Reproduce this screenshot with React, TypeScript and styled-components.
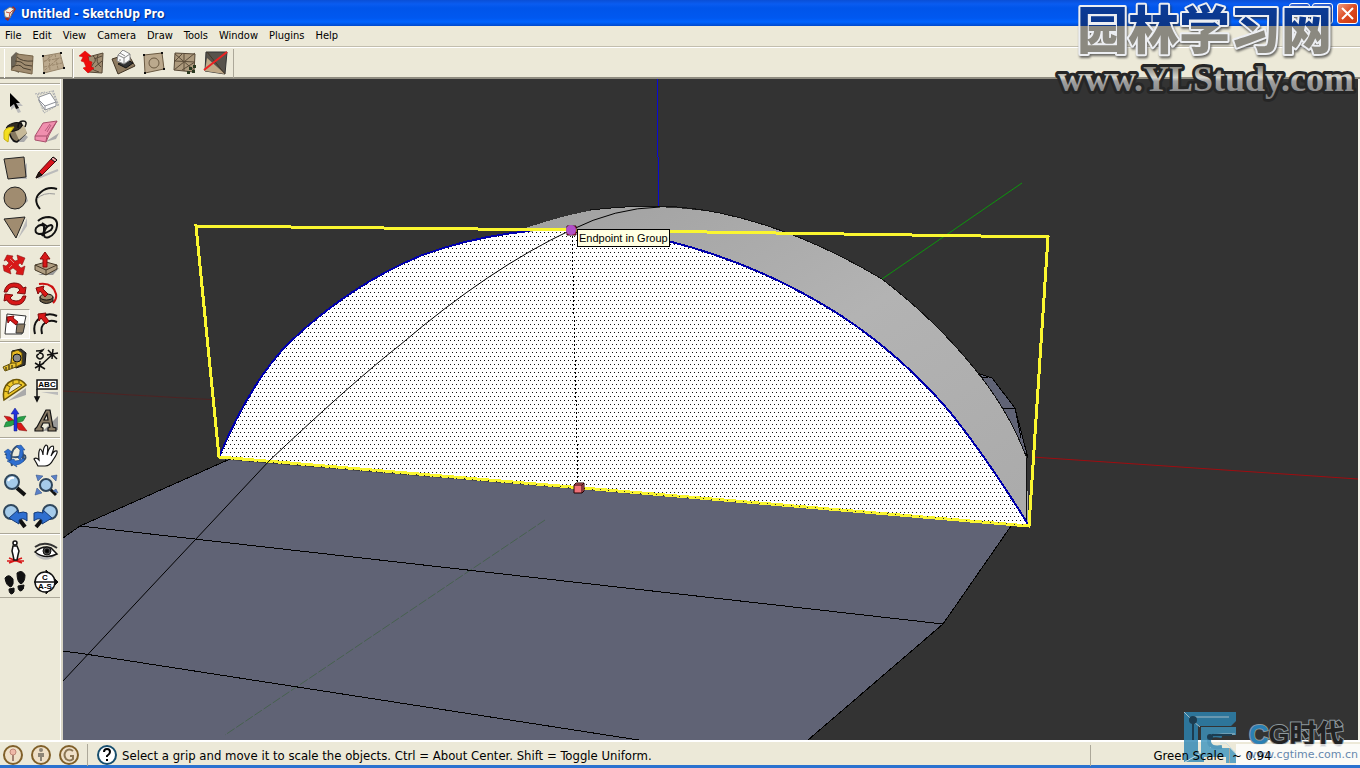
import React from "react";
import styled, { createGlobalStyle } from "styled-components";

const ui = '"DejaVu Sans Condensed", "DejaVu Sans", sans-serif';
const face = "#ece9d8";

const GlobalStyle = createGlobalStyle`
  * { box-sizing: border-box; }
  body { margin: 0; font-family: ${ui}; font-size: 11px; color: #000; background: ${face}; overflow: hidden; }
  button { font: inherit; color: inherit; border: 0; background: none; padding: 0; margin: 0; }
`;

const Window = styled.div`
  position: relative;
  display: flex;
  flex-direction: column;
  height: 100vh;
  background: ${face};
`;

const TitleBar = styled.header`
  display: flex;
  align-items: center;
  gap: 4px;
  height: 26px;
  flex: none;
  padding: 0 2px;
  background: linear-gradient(#0a4fd6 0, #0a5cf0 4px, #0055ea 8px, #0058f0 18px, #0064ff 22px, #0049cc 26px);
`;

const Title = styled.h1`
  flex: 1;
  margin: 0;
  padding-top: 1px;
  font: bold 12px ${ui};
  color: #fff;
  text-shadow: 1px 1px 1px #0a2a80;
`;

const Controls = styled.div`
  display: flex;
  gap: 2px;
`;

const ControlButton = styled.button<{ $close?: boolean }>`
  width: 21px;
  height: 21px;
  margin-left: ${(p) => (p.$close ? "2px" : "0")};
  border: 1px solid #fff;
  border-radius: 3px;
  background: ${(p) => (p.$close ? "linear-gradient(135deg, #ee9a80, #dd4b22 50%, #c8360f)" : "linear-gradient(135deg, #3f6cd8, #1446b8)")};
  svg { display: block; margin: auto; }
`;

const MenuBar = styled.nav`
  display: flex;
  gap: 11px;
  align-items: center;
  height: 20px;
  flex: none;
  padding: 0 5px;
`;

const MenuItem = styled.button`
  line-height: 16px;
`;

const ToolBar = styled.div`
  display: flex;
  align-items: center;
  height: 33px;
  flex: none;
  padding: 2px 0 0 4px;
  border-top: 1px solid #c2beae;
  border-bottom: 2px solid #8f8c80;
  box-shadow: inset 0 1px #fff;
`;

const ToolSet = styled.div`
  display: flex;
  gap: 1px;
  height: 29px;
  align-items: center;
  padding: 0 4px 0 2px;
  border-left: 1px solid #fff;
  border-right: 1px solid #aca899;
  & + & { padding: 0 2px 0 3px; }
`;

const ToolButton = styled.button<{ $active?: boolean }>`
  display: grid;
  place-items: center;
  width: 30px;
  height: 30px;
  border: 1px solid;
  border-color: ${(p) => (p.$active ? "#aca899 #fff #fff #aca899" : "transparent")};
  background: ${(p) => (p.$active ? "#f6f4ec" : "none")};
`;

const Body = styled.div`
  display: flex;
  flex: 1;
  min-height: 0;
`;

const Palette = styled.aside`
  width: 63px;
  flex: none;
  padding-top: 4px;
  border-right: 2px solid #d8d5c6;
  box-shadow: inset -1px 0 #fff;
`;

const Group = styled.div`
  display: grid;
  grid-template-columns: 30px 30px;
  column-gap: 1px;
  padding: 3px 0 2px;
  border-top: 1px solid #aca899;
  box-shadow: inset 0 1px #fff;
  margin-right: 1px;
  &:last-child { border-bottom: 1px solid #aca899; padding-bottom: 0; }
`;

const Viewport = styled.main`
  position: relative;
  flex: 1;
  min-width: 0;
  background: #333;
  border-right: 2px solid #f4f2e8;
  svg { display: block; }
`;

const Tip = styled.div`
  position: absolute;
  left: 514px;
  top: 150px;
  padding: 1px 1px 0;
  border: 1px solid #000;
  background: #ffffe1;
  font: 11px/15px "Liberation Sans", sans-serif;
  white-space: nowrap;
`;

const StatusBar = styled.footer`
  display: flex;
  align-items: center;
  height: 28px;
  flex: none;
  padding: 3px 0 0 2px;
  border-top: 2px solid #fff;
  border-bottom: 3px solid #2b72cf;
  font-size: 13px;
`;

const Badges = styled.div`
  display: flex;
  gap: 6px;
  padding-right: 7px;
  margin-right: 8px;
  border-right: 1px solid #aca899;
  svg { display: block; }
`;

const Hint = styled.span`
  flex: 1;
  padding-left: 4px;
`;

const Measure = styled.div`
  position: relative;
  z-index: 1;
  display: flex;
  width: 270px;
  height: 21px;
  align-items: center;
  border-left: 1px solid #aca899;
`;

const MeasureLabel = styled.span`
  width: 139px;
  padding-right: 5px;
  text-align: right;
  border-right: 1px solid #aca899;
  margin-right: 2px;
`;

const SiteMark = styled.div`
  position: absolute;
  right: 0;
  top: 0;
  pointer-events: none;
  svg { display: block; }
`;

const CgMark = styled.div`
  position: absolute;
  right: 0;
  bottom: 3px;
  width: 176px;
  height: 53px;
  display: flex;
  pointer-events: none;
  svg { flex: none; }
`;

const CgText = styled.div`
  flex: 1;
  display: flex;
  flex-direction: column;
  align-items: flex-start;
`;

const CgName = styled.div`
  height: 32px;
  padding-left: 13px;
  font: 900 27px/46px "Liberation Sans", "Noto Sans CJK SC", sans-serif;
  color: #222;
  -webkit-text-stroke: 2px #8d979c;
  paint-order: stroke fill;
  white-space: nowrap;
  span { color: #2a80b4; }
`;

const CgUrl = styled.div`
  align-self: stretch;
  height: 21px;
  padding-right: 2px;
  text-align: right;
  background: rgba(255, 255, 255, 0.8);
  font: 11px/22px "DejaVu Sans", sans-serif;
  color: #6688ad;
`;

const wood = "#a08c70";
const red = "#d81818";
const blue = "#2f6fd0";
const K = "#111";

const Ic = ({ children }: { children: React.ReactNode }) => (
  <svg width="26" height="26" viewBox="0 0 26 26" fill="none" stroke={K} strokeWidth="1" aria-hidden="true">
    {children}
  </svg>
);

const toolbarIcons: Record<string, React.ReactNode> = {
  "From Contours": (
    <Ic><path d="M2 7l5-5 3 2v19l-8-4z" fill="#6c6558" stroke="none" /><path d="M8 4l16 2-1 18-21-4 5-6z" fill={wood} stroke="#766449" /><path d="M8 7q5 5 16 4M6 11q7 0 10 4l7 1M3 17q8-4 11 1l8 2" stroke="#4b4030" /></Ic>
  ),
  "From Scratch": (
    <Ic><path d="M3 6l17-3 4 15-20 5z" fill="#bba98d" stroke="#97856a" /><path d="M4 11l17-3M4 17l18-4M9 5l1 16M15 4l3 15M4 12l9-7M5 20L20 7" stroke="#9a876b" strokeDasharray="3 1" /><path d="M2 6h2M20 3h2M23 18h2M3 23h2" strokeWidth="2" /></Ic>
  ),
  Smoove: (
    <Ic><path d="M9 7l15-4-1 20-14-1z" fill={wood} stroke="#554735" /><path d="M14 6q5 3 0 8t6 8M19 5q-3 7 3 12M15 9l8-3M16 17l7-6" stroke="#554735" /><path d="M6 1l6 5H9l1 5 3 1-1 5 3 1-6 5-5-5 3-1-2-5-3-1 2-4-4-1z" fill="#ee0c0c" stroke="#c00" strokeWidth=".5" /></Ic>
  ),
  Stamp: (
    <Ic><path d="M2 9l16-5 7 12-17 8z" fill="#8e7b60" stroke="#403424" /><path d="M8 14l8 4 7-5-7-4z" fill="#333" /><path d="M8 5l5-5 7 4v6l-6 4-7-3z" fill="#fafafa" stroke="#888" /><path d="M8 5l6 3 6-4M14 8v6M10 3l5 3M10 9v2" stroke="#888" /></Ic>
  ),
  Drape: (
    <Ic><path d="M3 5l18-2 2 16-19 4z" fill="#bba98d" stroke="#6a5a42" /><circle cx="13" cy="13" r="5" stroke="#6b5a42" /><path d="M2 5h2M20 3h2M22 19h2M3 23h2" strokeWidth="2" /></Ic>
  ),
  "Add Detail": (
    <Ic><path d="M3 3l20 1-1 18-20-2z" fill="#ad9a7d" stroke="#554735" /><path d="M2 20L23 3M3 11l20 1M12 4v17M3 4l20 17M3 11l7-7M10 20l13-8" stroke="#5c4d39" /><path d="M17 17h3v3h-3zM20 20h3v3h-3zM21 15h3v3h-3zM15 21h3v3h-3z" fill="#2b3a20" stroke="none" /></Ic>
  ),
  "Flip Edge": (
    <Ic><path d="M3 2h21l-2 22-20-3z" fill="#57534c" stroke="#333" /><path d="M4 8l18 16-20-3z" fill="#c0aa88" stroke="none" /><path d="M4 2l18 22" stroke="#443827" /><path d="M1 20L24 2" stroke="#e22" strokeWidth="2" /></Ic>
  ),
};

const paletteGroups: [string, React.ReactNode][][] = [
  [
    ["Select", <Ic><path d="M8 4v16l4-3 3 6 3-1-3-6h5z" fill="#bbb" stroke="none" transform="translate(1 1)" /><path d="M8 4v14l4-3 2 5 3-1-3-5h4z" fill="#000" stroke="none" /></Ic>],
    ["Make Component", <Ic><path d="M4 6l15-4 6 14-14 8zM2 5l10-2M20 1l6 16" stroke="#a9abb0" strokeDasharray="2 1" /><path d="M6 8l11-4 6 9v4l-11 4-6-9z" fill="#fff" stroke="#8c8f96" /><path d="M6 11l6 6 11-4M12 17v4" stroke="#8c8f96" /></Ic>],
    ["Paint Bucket", <Ic><path d="M10 23h12l4-5-5-4z" fill="#aaa" stroke="none" /><path d="M6 9l13-5 5 10-9 9q-6 0-9-14z" fill="#86795f" strokeWidth="1.5" /><path d="M13 12l9-6 3 8-8 7z" fill="#c6b998" stroke="none" /><ellipse cx="12" cy="8" rx="8" ry="4" transform="rotate(-16 12 8)" fill="#302b22" /><path d="M16 9q0-7 5-7t2 6" strokeWidth="1.5" /><path d="M12 8Q3 8 2 13l0 7 4 3 1-8z" fill="#f3df20" stroke="#c8b010" /></Ic>],
    ["Eraser", <Ic><path d="M12 23l11-3 3-6z" fill="#aaa" stroke="none" /><path d="M2 17L10 4l14-2-8 14-3 7-11-2z" fill="#f08fae" stroke="#a8506c" /><path d="M2 17l12 0L24 2M14 17l-1 5" stroke="#a8506c" /><path d="M12 12l5-7M14 13l4-7" stroke="#b85c7c" /></Ic>],
  ],
  [
    ["Rectangle", <Ic><path d="M10 24h15V8z" fill="#bbb" stroke="none" /><path d="M2 4l20-2 2 20-18 2z" fill={wood} stroke="#222" /></Ic>],
    ["Line", <Ic><path d="M5 23l20-8" stroke="#bbb" strokeWidth="2" /><path d="M3 23l3-6L20 2l4 3L9 20z" fill="#d8141c" stroke="#5c0a0c" /><path d="M3 23l3-6 3 3z" fill="#2a1a10" /><path d="M18 4l4 3 2-2-4-3z" fill="#f4a5a8" /></Ic>],
    ["Circle", <Ic><path d="M16 25l10-9-2-6z" fill="#aaa" stroke="none" /><circle cx="13" cy="13" r="11" fill={wood} stroke="#222" /></Ic>],
    ["Arc", <Ic><path d="M7 24Q-1 14 8 7 15 1 24 4" strokeWidth="2" /><path d="M4 14q6-7 18-5" stroke="#999" /></Ic>],
    ["Polygon", <Ic><path d="M16 24l9-13v-8z" fill="#bbb" stroke="none" /><path d="M2 4l21-2-9 21z" fill={wood} stroke="#222" /></Ic>],
    ["Freehand", <Ic><path d="M5 6q4-4 11-4 9 1 8 9-1 8-8 11-5 2-5-3 1-8 7-9 3 1 0 5-6 4-12 4-5-1-3-6 4-5 8-2 1 5-2 10M9 8l6 4" strokeWidth="2" /></Ic>],
  ],
  [
    ["Move", <Ic><path d="M5 4l6 1-1 2 3 3 3-1-1-5 8 3-3 7-2-2-2 2 3 3 4-2-2 9-7-1 1-3-4-3-3 2 1 4-7-3-1-6 3 1 3-3-3-3-2 1z" fill={red} stroke="#7d0c0c" strokeWidth=".5" /><path d="M8 8l4 4M10 14l-3 3" stroke={face} strokeWidth=".5" /></Ic>],
    ["Push/Pull", <Ic><path d="M5 24l15 0 6-7z" fill="#999" stroke="none" /><path d="M2 14l11-3 11 3v4l-11 6-11-5z" fill="#ae9c80" stroke="#443827" /><path d="M2 14l11 5 11-5M13 19v5" stroke="#443827" /><path d="M12 1l5 7h-3v8h-4V8H7z" fill={red} stroke="#8a0808" /></Ic>],
    ["Rotate", <Ic><path d="M2 11Q4 2 12 2q7 0 9 5l3-1-1 7-8-1 3-3q-2-3-6-3-5 0-7 5z" fill={red} stroke="#7d0c0c" /><path d="M24 15q-2 9-10 9-7 0-9-5l-3 1 1-7 8 1-3 3q2 3 6 3 5 0 7-5z" fill={red} stroke="#7d0c0c" /></Ic>],
    ["Follow Me", <Ic><path d="M6 3Q20 1 23 13q1 5-3 9" stroke="#c11" strokeWidth="2" /><path d="M7 16v4q6 5 13 0v-4z" fill="#66573f" /><ellipse cx="13.5" cy="16" rx="6.5" ry="3" fill="#9c8a6d" /><path d="M3 7l8-2-1 3 5 5-3 3-5-6-2 3z" fill={red} stroke="#7d0c0c" /></Ic>],
    ["Scale", <Ic><path d="M5 3l19 2-4 18-17 0z" fill="#fff" stroke="#333" /><path d="M15 13h8l-2 9h-7z" fill="#8d7d66" stroke="#333" /><path d="M5 6l7-1-1 2 5 4-2 3-6-5-2 3z" fill={red} stroke="#7d0c0c" /></Ic>],
    ["Offset", <Ic><path d="M2 23Q-1 12 8 6 16 1 24 5" strokeWidth="2" /><path d="M9 23q-2-8 3-11 5-4 12-1" strokeWidth="2" /><path d="M5 3l8-1-1 3 4 5-3 3-5-6-2 3z" fill={red} stroke="#7d0c0c" /></Ic>],
  ],
  [
    ["Tape Measure", <Ic><path d="M10 4l9-2 5 4-1 12-9 3-5-4z" fill="#333" /><path d="M10 5l6-2 4 3v11l-6 3-5-3z" fill="#e6b820" stroke="#5c4a08" /><circle cx="15" cy="11" r="4" fill="#8b8b88" /><path d="M14 16v4L3 24l-2-4 9-4z" fill="#e9c332" stroke="#5c4a08" /><path d="M4 20v3M7 18v4M10 18v3" /></Ic>],
    ["Dimension", <Ic><path d="M7 19L20 7M2 16l10 6M7 14l-1 10M2 21l9-5M15 3l9 9M20 2l-1 10M14 8l11-2" strokeWidth="1.5" /><path d="M3 4q5 0 7-1-1 2-4 3 5 0 4 4-3 4-6 0-1-2 2-3" strokeWidth="1.5" /></Ic>],
    ["Protractor", <Ic><path d="M6 24l18-6v-7z" fill="#aaa" stroke="none" /><path d="M2 23Q-1 8 11 3q8-2 13 5z" fill="#f0c828" stroke="#6b5506" strokeWidth="1.5" /><path d="M6 17q1-8 7-10 4-1 7 1z" fill={face} stroke="#6b5506" /><path d="M2 14l4 1M5 8l3 2M11 3v4M17 3v3" stroke="#6b5506" /></Ic>],
    ["Text", <Ic><path d="M4 12v11M2 20l2 4 2-4z" fill="#000" strokeWidth="1.5" /><path d="M8 15h17v3z" fill="#bbb" stroke="none" /><path d="M4 3h20v9H4z" fill="#fff" strokeWidth="1.5" /><text x="14" y="10" textAnchor="middle" fontSize="8" fontWeight="bold" fontFamily="Liberation Sans" fill="#000" stroke="none">ABC</text></Ic>],
    ["Axes", <Ic><path d="M2 9l6 1 7 6 4 0 6 8-8-1-3-4-8-5z" fill={red} stroke="#7d0c0c" strokeWidth=".5" /><path d="M2 20l2-5 8-2 5-3 7-1-3 5-7 2-5 3z" fill="#27a048" stroke="#0b5c20" strokeWidth=".5" /><path d="M13 1l4 6h-2v17h-3V7h-3z" fill="#2233dd" stroke="#101a7a" strokeWidth=".5" /></Ic>],
    ["3D Text", <Ic><path d="M10 24l15-1V9z" fill="#999" stroke="none" /><path d="M2 22l2-2L13 3h4l3 17 3 1v3h-8v-3l2-1-1-4h-6l-2 4 2 1v3H2zM11 13h4l-1-6z" fill="#8a7c66" fillRule="evenodd" strokeWidth="1.2" /></Ic>],
  ],
  [
    ["Orbit", <Ic><path d="M3 11q9 6 20 1M15 3q-8 5-5 20" stroke="#37506e" strokeWidth="2" /><path d="M15 3q7 2 6 14M23 12q2 5-5 7" stroke="#37506e" strokeWidth="2" /><path d="M2 9l4-3 4 3-2 1q2 4 0 8l-4-3q1-3 0-5zM14 3l5-1 4 5-2 0q1 6-3 10l-2-2q2-4 2-8zM5 18l7-2 1 2q5 0 9-3l0 3q-4 4-8 4l1 2z" fill={blue} stroke="#174081" strokeWidth=".5" /></Ic>],
    ["Pan", <Ic><path d="M5 23Q3 19 1 16q2-2 5 1Q5 9 7 6q2 0 3 6 0-8 3-10 3 0 1 10 2-9 6-9 2 1-2 10 3-6 6-5 1 2-4 9-3 6-8 6z" fill="#fff" strokeWidth="1.2" /></Ic>],
    ["Zoom", <Ic><path d="M15 15l8 7" strokeWidth="4" /><circle cx="10" cy="9" r="7" fill="#a5cbea" stroke="#30475c" strokeWidth="2" /><path d="M6 8q2-4 6-3" stroke="#fff" strokeWidth="2" /></Ic>],
    ["Zoom Extents", <Ic><path d="M17 16l6 6" strokeWidth="3" /><path d="M3 2l7 1-5 5zM24 2l-1 6-5-5zM2 22l2-7 5 5zM20 18l3-2 2 4z" fill="#5a80c8" stroke="#2b4b7e" strokeWidth=".5" /><circle cx="13" cy="12" r="6" fill="#a5cbea" stroke="#30475c" strokeWidth="2" /></Ic>],
    ["Previous View", <Ic><path d="M17 16l6 8" strokeWidth="4" /><circle cx="9" cy="9" r="7" fill="#a5cbea" stroke="#30475c" strokeWidth="2" /><path d="M7 15l9-8v3q6-2 9 0v8q-4-4-8-1v4z" fill={blue} stroke="#153b78" /></Ic>],
    ["Next View", <Ic><path d="M9 17l-6 7" strokeWidth="4" /><circle cx="17" cy="9" r="7" fill="#a5cbea" stroke="#30475c" strokeWidth="2" /><path d="M19 15l-9-8v3q-6-2-9 0v8q4-4 8-1v4z" fill={blue} stroke="#153b78" /></Ic>],
  ],
  [
    ["Position Camera", <Ic><path d="M7 19l13 5M20 19L7 24M5 22h17" stroke={red} strokeWidth="1.5" /><path d="M11 7h4l2 5-1 4-1 5h-3l-1-5-1-4z" fill="#fff" strokeWidth="1.5" /><circle cx="13" cy="4" r="2" fill="#fff" strokeWidth="1.5" /></Ic>],
    ["Look Around", <Ic><path d="M3 15q9 9 19 1" fill="#ccc" stroke="#bbb" strokeWidth="2" /><path d="M2 13Q10 6 18 9l6 6q-12 6-22-2z" fill="#fff" strokeWidth="1.5" /><circle cx="14" cy="12" r="4" fill="#555" /><circle cx="14" cy="12" r="2" fill="#000" /><path d="M2 8Q12 1 24 9" stroke="#333" strokeWidth="2" /></Ic>],
    ["Walk", <Ic><path d="M3 9q4-5 8 1 1 6-2 8-5-1-6-9zM7 20l5-1q1 5-2 6-3 0-3-5zM15 4q5-4 8 2 0 7-4 9-4-2-4-11zM16 17l6-1q0 5-3 6-3 0-3-5z" fill="#111" /></Ic>],
    ["Section Plane", <Ic><path d="M13 1l12 12-12 12z" fill="#000" /><circle cx="12" cy="13" r="10" fill="#fff" strokeWidth="1.5" /><path d="M1 13h24" strokeWidth="1.5" /><text x="12" y="11" textAnchor="middle" fontSize="8" fontWeight="bold" fontFamily="Liberation Sans" fill="#000" stroke="none">C</text><text x="12" y="20" textAnchor="middle" fontSize="8" fontWeight="bold" fontFamily="Liberation Sans" fill="#000" stroke="none">A-S</text></Ic>],
  ],
];

const Scene = () => (
  <svg width="100%" height="100%" viewBox="63 79 1295 661" preserveAspectRatio="xMinYMin slice" fill="none">
    <defs>
      <pattern id="dots" width="4" height="8" patternUnits="userSpaceOnUse">
        <rect width="4" height="8" fill="#fff" />
        <path d="M0 0h1v1H0zM2 4h1v1H2z" fill="#111" shapeRendering="crispEdges" />
      </pattern>
      <linearGradient id="shell" x1="0" y1="0" x2="1" y2="1">
        <stop offset="0" stopColor="#a0a0a0" />
        <stop offset=".5" stopColor="#b3b3b3" />
        <stop offset="1" stopColor="#aaa" />
      </linearGradient>
    </defs>
    <path d="M63 538l17-12 150-67h-11l810 68-18-1-68 98-135 116H63z" fill="#606375" />
    <path d="M63 391l156 9" stroke="#4e2323" />
    <path d="M1032 457l326 22" stroke="#a00c10" />
    <path d="M882 279l140-96" stroke="#0c960c" />
    <path d="M657 79h1v78h-1zM658 157h1v50h-1z" fill="#0a0ad2" />
    <path d="M545 520L225 735" stroke="#47614f" strokeDasharray="9 2" />
    <g shapeRendering="crispEdges">
      <path d="M63 538l17-12 150-67M1011 526l-68 98-135 116M80 526l863 98M63 651l22 3 560 87" stroke="#000" />
      <path d="M980 374l12 4 23 30 13 50-20-35z" fill="#606375" stroke="#000" />
      <path d="M988 377h-7M1003 408h12l6 30" stroke="#000" />
      <path d="M520 230Q575 211 610 208 660 204 720 213 800 230 882 279 942 325 985 382 1011 417 1026 456L1029 526 900 440 700 260z" fill="url(#shell)" />
      <path d="M590 210Q625 206 660 206 690 207 720 213 800 230 882 279 942 325 985 382 1011 417 1026 456l1 65" stroke="#111" />
      <path d="M219 457Q252 379 290 342 350 285 420 256 490 230 570 230 625 229 668 241 760 264 840 315 900 354 950 412 990 462 1029 526z" fill="url(#dots)" />
      <path d="M219 457Q252 379 290 342 350 285 420 256 470 237 530 231M668 241Q760 264 840 315 900 354 950 412 990 462 1029 526" stroke="#0000ac" strokeWidth="2" />
      <path d="M572 232l6 252" stroke="#000" strokeDasharray="2 2" />
      <path d="M219 457L196 226 570 230 1048 237 1029 526z" stroke="#faf630" strokeWidth="3" />
      <path d="M225 459l800 66" stroke="#222" strokeDasharray="1 7" />
    </g>
    <path d="M63 681L150 588 270 460Q355 380 400 345 490 268 571 230 615 208 660 207" stroke="#000" />
    <path d="M574 485l2-2h8v8l-2 2h-8z" fill="#f07078" stroke="#200" />
    <path d="M574 485h8v8M582 485l2-2" stroke="#200" />
    <path d="M567 226h9v9h-9z" fill="#d8285c" stroke="#301" />
    <circle cx="571" cy="230" r="5" fill="#b050c8" />
  </svg>
);

const App = () => (
  <>
    <GlobalStyle />
    <Window>
      <TitleBar>
        <svg width="15" height="18" viewBox="0 0 15 18" aria-hidden="true">
          <path d="M3 15l3 2 8-12-3-3z" fill="#a4281c" />
          <path d="M2 7l6-4 4 2-4 9-5-1z" fill="#f4efe8" stroke="#777" />
          <path d="M4 8l4 1 3-3M8 9l-1 5" fill="none" stroke="#c6503c" />
        </svg>
        <Title>Untitled - SketchUp Pro</Title>
        <Controls>
          <ControlButton aria-label="Minimize"><svg width="13" height="13"><path d="M1 9h6v3H1z" fill="#fff" /></svg></ControlButton>
          <ControlButton aria-label="Restore"><svg width="13" height="13" fill="none" stroke="#fff" strokeWidth="2"><path d="M4 4V1h8v7H9M1 5h7v7H1z" /></svg></ControlButton>
          <ControlButton $close aria-label="Close"><svg width="13" height="13" stroke="#fff" strokeWidth="2"><path d="M1 1l11 11M12 1L1 12" /></svg></ControlButton>
        </Controls>
      </TitleBar>
      <MenuBar>
        {["File", "Edit", "View", "Camera", "Draw", "Tools", "Window", "Plugins", "Help"].map((m) => (
          <MenuItem key={m}>{m}</MenuItem>
        ))}
      </MenuBar>
      <ToolBar>
        {[["From Contours", "From Scratch"], ["Smoove", "Stamp", "Drape", "Add Detail", "Flip Edge"]].map((set) => (
          <ToolSet key={set[0]}>
            {set.map((name) => (
              <ToolButton key={name} aria-label={name}>{toolbarIcons[name]}</ToolButton>
            ))}
          </ToolSet>
        ))}
      </ToolBar>
      <Body>
        <Palette>
          {paletteGroups.map((group) => (
            <Group key={group[0][0]}>
              {group.map(([name, icon]) => (
                <ToolButton key={name} aria-label={name} $active={name === "Scale"}>{icon}</ToolButton>
              ))}
            </Group>
          ))}
        </Palette>
        <Viewport>
          <Scene />
          <Tip role="tooltip">Endpoint in Group</Tip>
        </Viewport>
      </Body>
      <StatusBar>
        <Badges>
          <svg width="22" height="22" viewBox="0 0 22 22" fill="none"><circle cx="11" cy="11" r="9" fill="#efe0c8" stroke="#80602a" strokeWidth="2" /><path d="M11 11v6" stroke="#a08070" strokeWidth="2" /><circle cx="11" cy="8" r="3" fill="#eeb8a8" stroke="#c08878" /></svg>
          <svg width="22" height="22" viewBox="0 0 22 22" fill="none"><circle cx="11" cy="11" r="9" fill="#efe0c8" stroke="#80602a" strokeWidth="2" /><path d="M8 9h6v4h-2v4h-2v-4H8z" fill="#8d8577" /><circle cx="11" cy="6" r="2" fill="#8d8577" /></svg>
          <svg width="22" height="22" viewBox="0 0 22 22" fill="none"><circle cx="11" cy="11" r="9" fill="#efe0c8" stroke="#80602a" strokeWidth="2" /><path d="M15 7q-4-3-7 0-3 4 0 8 4 3 7 0v-3h-3" stroke="#8b7654" strokeWidth="2" /></svg>
        </Badges>
        <svg width="22" height="22" viewBox="0 0 22 22" fill="none"><circle cx="11" cy="11" r="9" fill="#fff" stroke="#174e6d" strokeWidth="2" /><path d="M8 8q0-3 3-3t3 3q0 2-3 4v1" stroke="#000" strokeWidth="2" /><path d="M10 15h2v2h-2z" fill="#000" /></svg>
        <Hint>Select a grip and move it to scale the objects. Ctrl = About Center. Shift = Toggle Uniform.</Hint>
        <Measure>
          <MeasureLabel>Green Scale</MeasureLabel>
          <span>~ 0.94</span>
        </Measure>
      </StatusBar>
      <SiteMark>
        <svg width="310" height="104" viewBox="0 0 310 104">
          <defs>
            <linearGradient id="name" gradientUnits="userSpaceOnUse" x1="0" y1="0" x2="0" y2="60">
              <stop offset="0" stopColor="#0b3d9c" />
              <stop offset=".43" stopColor="#0b3688" />
              <stop offset=".43" stopColor="#8b8980" />
              <stop offset="1" stopColor="#8b8980" />
            </linearGradient>
            <linearGradient id="url" gradientUnits="userSpaceOnUse" x1="0" y1="64" x2="0" y2="98">
              <stop offset="0" stopColor="#77756e" />
              <stop offset=".4" stopColor="#d6d5cc" />
              <stop offset=".5" stopColor="#a0a0a0" />
              <stop offset="1" stopColor="#808080" />
            </linearGradient>
          </defs>
          <text x="27" y="49" fontFamily="Noto Sans CJK SC, sans-serif" fontWeight="900" fontSize="51" fill="url(#name)" stroke="#eceef2" strokeWidth="4" strokeLinejoin="round" paintOrder="stroke" filter="drop-shadow(1px 2px 1px rgba(50,50,50,.7))">园林学习网</text>
          <text x="8" y="91" fontFamily="Liberation Serif, serif" fontWeight="bold" fontSize="36" fill="url(#url)" stroke="#262626" strokeWidth="6" strokeLinejoin="round" paintOrder="stroke">www.YLStudy.com</text>
        </svg>
      </SiteMark>
      <CgMark>
        <svg width="52" height="53" viewBox="0 0 52 53" fill="none" opacity=".8">
          <path d="M0 0h52v9l-5 5H14v27h6v9H0z" fill="#2c86b4" />
          <path d="M17 15h35v8H26v13h20l6 6v9H42v-6H17z" fill="#3d95bf" />
          <path d="M0 0l9 9M10 10l6 5M9 5h36M24 24l7-2h20M36 31h6l9 9M1 50l16-9" stroke="#c0dcea" />
          <path d="M38 24q-13-3-13 5 0 8 13 6" stroke="#2c86b4" strokeWidth="4" />
          <circle cx="9" cy="8" r="4" fill="#173f58" />
          <path d="M9 8v20" stroke="#173f58" strokeWidth="2" />
          <circle cx="26" cy="25" r="3" fill="#173f58" />
          <path d="M28 23h20" stroke="#173f58" strokeWidth="2" />
        </svg>
        <CgText>
          <CgName><span>C</span>G时代</CgName>
          <CgUrl>www.cgtime.com.cn</CgUrl>
        </CgText>
      </CgMark>
    </Window>
  </>
);

export default App;
